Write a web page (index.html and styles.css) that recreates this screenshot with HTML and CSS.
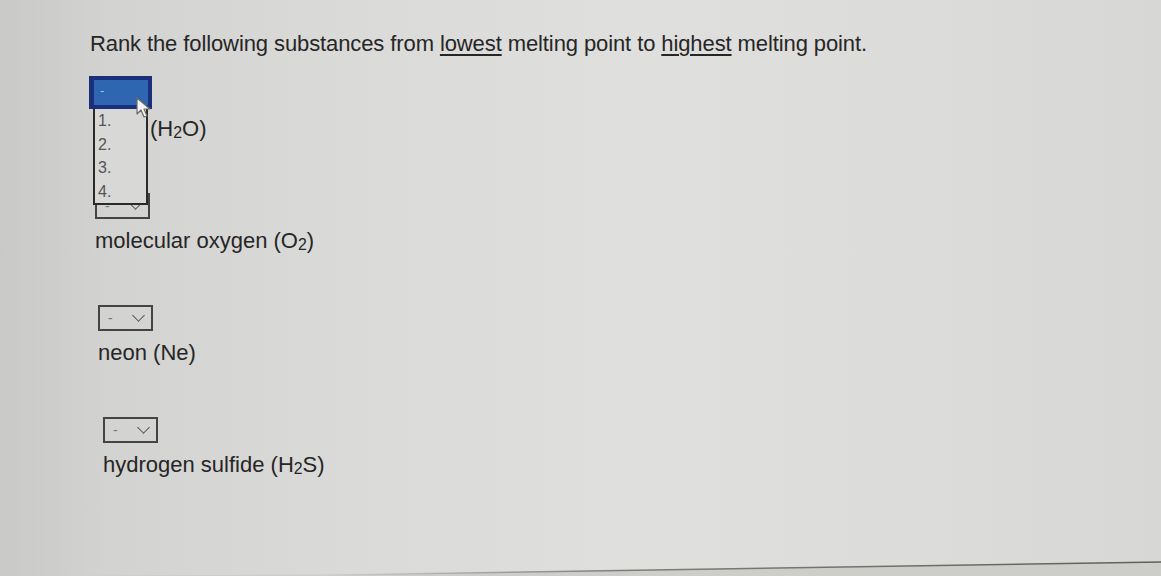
FILE: index.html
```html
<!DOCTYPE html>
<html lang="en">
<head>
<meta charset="utf-8">
<title>Rank substances by melting point</title>
<link rel="stylesheet" href="styles.css">
</head>
<body>
<main class="page">
  <p class="prompt">Rank the following substances from <u>lowest</u> melting point to <u>highest</u> melting point.</p>

  <ol class="rank-list">
    <li class="rank-item item-1">
      <div class="select-wrap">
        <div class="select"><span class="select-value">-</span><span class="chevron"></span></div>
        <!-- open option list of the first select -->
        <div class="popup">
          <div class="popup-option is-active">-</div>
          <div class="popup-option">1.</div>
          <div class="popup-option">2.</div>
          <div class="popup-option">3.</div>
          <div class="popup-option">4.</div>
        </div>
        <svg class="cursor" width="16" height="22" viewBox="0 0 16 22">
          <path d="M1 1 L1 17 L5 13 L8 20 L11 19 L8 12 L14 12 Z" fill="#f4f4f4" stroke="#6a6a6a" stroke-width="1.2" stroke-linejoin="round"/>
        </svg>
      </div>
      <span class="label label-peek">(H<sub>2</sub>O)</span>
    </li>
    <li class="rank-item item-2">
      <div class="select"><span class="select-value">-</span><span class="chevron"></span></div>
      <span class="label">molecular oxygen (O<sub>2</sub>)</span>
    </li>
    <li class="rank-item item-3">
      <div class="select"><span class="select-value">-</span><span class="chevron"></span></div>
      <span class="label">neon (Ne)</span>
    </li>
    <li class="rank-item item-4">
      <div class="select"><span class="select-value">-</span><span class="chevron"></span></div>
      <span class="label">hydrogen sulfide (H<sub>2</sub>S)</span>
    </li>
  </ol>

  <div class="page-edge">
    <svg width="1161" height="20" viewBox="0 0 1161 20" preserveAspectRatio="none">
      <defs>
        <linearGradient id="edgeFade" x1="0" x2="1" y1="0" y2="0">
          <stop offset="0" stop-color="#6e6e6c" stop-opacity="0"/>
          <stop offset="0.35" stop-color="#6e6e6c" stop-opacity="0.85"/>
          <stop offset="1" stop-color="#5e5e5b" stop-opacity="1"/>
        </linearGradient>
      </defs>
      <polygon points="0,20 1161,20 1161,6.5 380,18" fill="#cdcdca"/>
      <line x1="330" y1="19" x2="1161" y2="6" stroke="url(#edgeFade)" stroke-width="1.6"/>
    </svg>
  </div>
</main>
</body>
</html>
```

FILE: styles.css
```css
html, body {
  margin: 0;
  padding: 0;
}

body {
  width: 1161px;
  height: 576px;
  overflow: hidden;
  font-family: "Liberation Sans", Arial, sans-serif;
  color: #262626;
  background:
    linear-gradient(90deg,
      #c9c9c7 0%,
      #d3d3d1 10%,
      #dadad8 30%,
      #dfdfdd 55%,
      #dcdcda 78%,
      #d7d7d5 100%);
}

.page {
  box-sizing: border-box;
  height: 576px;
  display: flex;
  flex-direction: column;
  padding-top: 30px;
}

.prompt {
  margin: 0 0 0 90px;
  font-size: 22px;
  line-height: 28px;
  letter-spacing: -0.1px;
}

.prompt u {
  text-decoration-thickness: 1.5px;
  text-underline-offset: 3px;
}

.rank-list {
  list-style: none;
  margin: 25px 0 0 0;
  padding: 0;
  display: flex;
  flex-direction: column;
  gap: 52px;
}

.rank-item {
  display: flex;
  flex-direction: column;
  align-items: flex-start;
  gap: 10px;
}

.item-1 { margin-left: 93px; }
.item-2 { margin-left: 95px; }
.item-3 { margin-left: 98px; }
.item-4 { margin-left: 103px; }

.select-wrap {
  position: relative;
}

.select {
  box-sizing: border-box;
  width: 55px;
  height: 26px;
  border: 2px solid #444;
  display: flex;
  align-items: center;
  padding: 0 8px 0 8px;
  justify-content: space-between;
  color: #777;
  font-size: 14px;
}

.select-value {
  line-height: 1;
}

.chevron {
  width: 8px;
  height: 8px;
  border-right: 1.5px solid #555;
  border-bottom: 1.5px solid #555;
  transform: translateY(-3px) rotate(45deg);
}

.label {
  font-size: 22px;
  line-height: 24px;
  color: #262626;
}

.label-peek {
  margin-left: 57px;
  margin-top: -2px;
}

.label sub {
  font-size: 0.72em;
  vertical-align: -2px;
  line-height: 0;
}

/* open option list */
.popup {
  position: absolute;
  left: 0;
  top: -4px;
  width: 55px;
  box-sizing: border-box;
  border: 2px solid #2a2a2a;
  border-top: none;
  background: #d8d8d6;
  display: flex;
  flex-direction: column;
  padding-bottom: 0;
  z-index: 2;
}

.popup-option {
  height: 23.5px;
  padding-left: 3px;
  font-size: 16px;
  line-height: 23.5px;
  color: #555;
}

.popup-option.is-active {
  height: 25px;
  margin: -3px -6px 0 -6px;
  border: 4px solid #1c2f7a;
  border-left-width: 5px;
  background: #2f66b2;
  color: #9fc0ea;
  font-size: 13px;
  line-height: 22px;
  padding-left: 6px;
}

.cursor {
  position: absolute;
  left: 43px;
  top: 14px;
  z-index: 3;
}

.page-edge {
  margin-top: auto;
  height: 20px;
  line-height: 0;
}
```
